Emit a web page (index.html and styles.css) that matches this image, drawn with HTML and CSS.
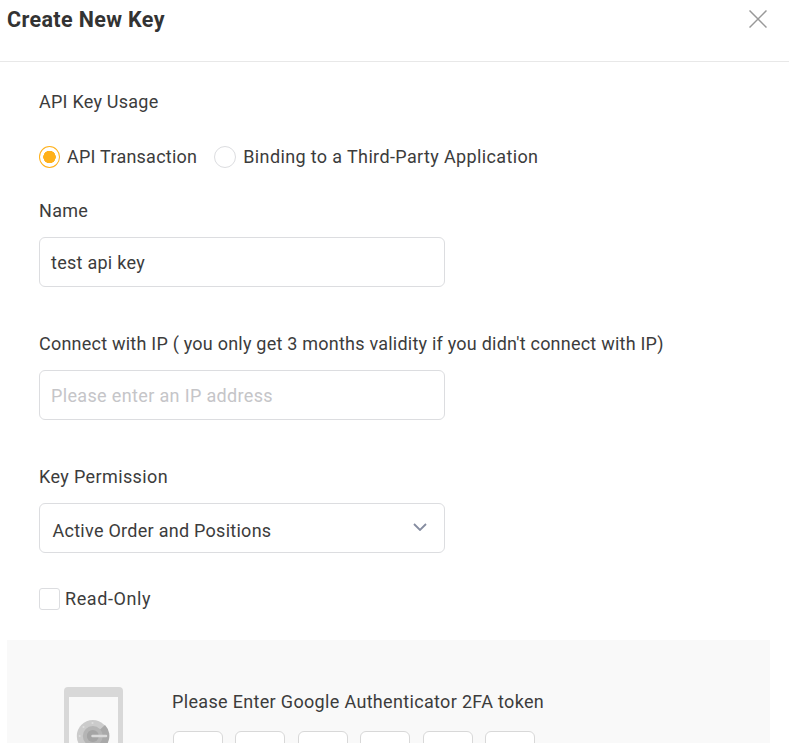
FILE: index.html
```
<!DOCTYPE html>
<html lang="en">
<head>
<meta charset="utf-8">
<title>Create New Key</title>
<link rel="stylesheet" href="styles.css">
</head>
<body>
<header class="dialog-header">
  <h1 class="dialog-title">Create New Key</h1>
  <svg class="close" viewBox="0 0 18 18"><path d="M0.5 0.5L17.5 17.5M17.5 0.5L0.5 17.5"/></svg>
</header>
<main class="form">
  <div class="label usage">API Key Usage</div>
  <div class="radios">
    <label class="option"><span class="radio checked"></span><span class="transaction">API Transaction</span></label>
    <label class="option"><span class="radio"></span><span class="binding">Binding to a Third-Party Application</span></label>
  </div>
  <div class="label name">Name</div>
  <div class="field value">test api key</div>
  <div class="label connect">Connect with IP ( you only get 3 months validity if you didn't connect with IP)</div>
  <div class="field placeholder">Please enter an IP address</div>
  <div class="label permission">Key Permission</div>
  <div class="field select"><span>Active Order and Positions</span>
    <svg class="chevron" viewBox="0 0 14 8"><path d="M1 1L7 7L13 1"/></svg></div>
  <label class="check-row"><span class="checkbox"></span><span class="readonly">Read-Only</span></label>
</main>
<section class="auth">
  <svg class="phone" viewBox="0 0 59 70">
    <path fill="#d8d8d8" d="M4 0H55Q59 0 59 4V70H54V10H5V70H0V4Q0 0 4 0Z"/>
    <circle cx="28.800" cy="49" r="16" fill="#cbcbcb"/>
    <path fill="#a9a9a9" d="M41 38L28.800 49V65A16 16 0 0 0 41 38Z"/>
    <circle cx="28.800" cy="49" r="10" fill="#b5b5b5"/>
    <circle cx="28.800" cy="49" r="6" fill="#a4a4a4"/>
    <path d="M28.500 49H42" stroke="#dadada" stroke-width="2.500" stroke-linecap="round"/>
    <g fill="#dedede"><circle cx="28.500" cy="36" r="1"/><circle cx="19.500" cy="40" r="1"/><circle cx="15.700" cy="49" r="1"/></g>
  </svg>
  <div class="token">
    <div class="label token-text">Please Enter Google Authenticator 2FA token</div>
    <div class="digits"><i></i><i></i><i></i><i></i><i></i><i></i></div>
  </div>
</section>
</body>
</html>
```
FILE: styles.css
```
* { box-sizing: border-box; }
body { margin: 0; height: 743px; overflow: hidden; background: #fff; color: #3c3c3c; font: 18px/24px Roboto, "Liberation Sans", sans-serif; white-space: nowrap; }
.dialog-header { height: 62px; border-bottom: 1px solid #e8e8e8; padding: 8px 22px 0 7px; display: flex; justify-content: space-between; }
.dialog-title { margin: 0; font-size: 21.500px; line-height: 24px; font-weight: 700; color: #333; letter-spacing: 0.370px; }
.close { width: 18px; height: 18px; margin-top: 2px; fill: none; stroke: #999; stroke-width: 1.500; }
.form { padding: 28px 39px 0; height: 578px; }
.label { height: 24px; }
.usage, .transaction { letter-spacing: 0.240px; }
.binding { letter-spacing: 0.370px; }
.name { letter-spacing: 0.300px; }
.connect { letter-spacing: 0.225px; }
.permission { letter-spacing: 0.380px; }
.readonly { letter-spacing: 0.600px; }
.token-text { letter-spacing: 0.330px; }
.radios { display: flex; gap: 17px; margin: 31px 0 30px; height: 24px; }
.option { display: flex; align-items: center; gap: 7px; }
.radio { width: 22px; height: 22px; border: 1px solid #dcdde0; border-radius: 50%; }
.radio.checked { width: 21px; border-color: #ffb11a; background: radial-gradient(circle, #ffb11a 6px, transparent 6.500px); }
.field { width: 406px; height: 50px; border: 1px solid #dcdde0; border-radius: 6px; margin: 14px 0 45px; padding: 2px 11px 0; display: flex; align-items: center; letter-spacing: 0.270px; }
.placeholder { color: #c5c5c8; letter-spacing: 0.350px; }
.select { justify-content: space-between; padding: 5px 17px 0 12.500px; margin-bottom: 34px; }
.chevron { width: 14px; height: 8px; margin-top: -7px; fill: none; stroke: #858ca0; stroke-width: 1.800; }
.check-row { display: flex; align-items: center; gap: 5px; height: 24px; }
.checkbox { width: 21px; height: 22px; border: 1px solid #dcdde0; border-radius: 3px; }
.auth { margin: 0 19px 0 7px; height: 103px; background: #f9f9f9; display: flex; padding: 47px 0 0 57px; gap: 49px; overflow: hidden; }
.phone { width: 59px; height: 70px; }
.token { padding-top: 3px; }
.digits { display: flex; gap: 12.500px; margin: 17px 0 0 0.600px; }
.digits i { width: 50px; height: 50px; background: #fff; border: 1px solid #d8d8d8; border-radius: 6px; }
```
